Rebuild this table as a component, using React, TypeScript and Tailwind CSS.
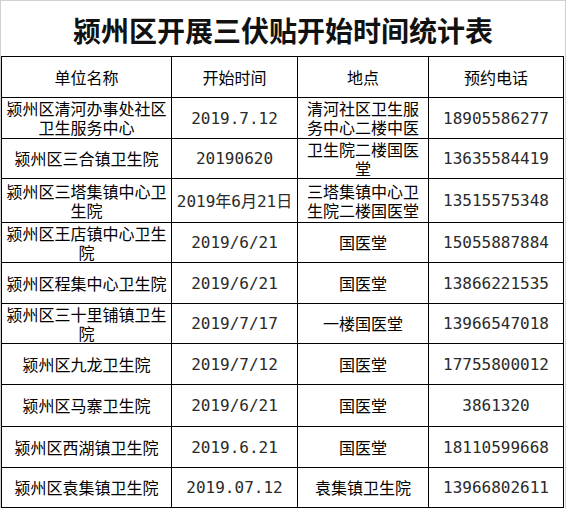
const cjk = "font-['Noto_Sans_CJK_SC',sans-serif]";
const mono = "font-['DejaVu_Sans_Mono','Noto_Sans_CJK_SC',monospace]";

type Row = { name: string; date: React.ReactNode; place: string; phone: string };

const rows: Row[] = [
  { name: "颍州区清河办事处社区卫生服务中心", date: "2019.7.12", place: "清河社区卫生服务中心二楼中医", phone: "18905586277" },
  { name: "颍州区三合镇卫生院", date: "20190620", place: "卫生院二楼国医堂", phone: "13635584419" },
  {
    name: "颍州区三塔集镇中心卫生院",
    date: (
      <>
        2019<span className={`${cjk} text-[16px]`}>年</span>6<span className={`${cjk} text-[16px]`}>月</span>21
        <span className={`${cjk} text-[16px]`}>日</span>
      </>
    ),
    place: "三塔集镇中心卫生院二楼国医堂",
    phone: "13515575348",
  },
  { name: "颍州区王店镇中心卫生院", date: "2019/6/21", place: "国医堂", phone: "15055887884" },
  { name: "颍州区程集中心卫生院", date: "2019/6/21", place: "国医堂", phone: "13866221535" },
  { name: "颍州区三十里铺镇卫生院", date: "2019/7/17", place: "一楼国医堂", phone: "13966547018" },
  { name: "颍州区九龙卫生院", date: "2019/7/12", place: "国医堂", phone: "17755800012" },
  { name: "颍州区马寨卫生院", date: "2019/6/21", place: "国医堂", phone: "3861320" },
  { name: "颍州区西湖镇卫生院", date: "2019.6.21", place: "国医堂", phone: "18110599668" },
  { name: "颍州区袁集镇卫生院", date: "2019.07.12", place: "袁集镇卫生院", phone: "13966802611" },
];

function Cell({ children, className = "" }: { children: React.ReactNode; className?: string }) {
  return (
    <div
      className={`flex items-center justify-center border-r border-b border-black px-[2px] text-center text-[16px] leading-[19px] ${className}`}
    >
      <div className="w-full">{children}</div>
    </div>
  );
}

export default function App() {
  return (
    <div className="h-[508px] w-[566px] overflow-hidden border-x border-t border-[#d0d0d0] bg-white">
      <div className={`flex h-[55px] items-center justify-center pt-[3px] ${cjk} text-[28px] font-bold text-[#111]`}>
        颍州区开展三伏贴开始时间统计表
      </div>
      <div className="grid w-[563px] grid-cols-[170px_126px_131px_135px] grid-rows-[41px_41px_40px_44px_40px_41px_40px_41px_42px_41px_40px] border-t border-l border-black">
        <Cell className={`${cjk} text-black`}>单位名称</Cell>
        <Cell className={`${cjk} text-black`}>开始时间</Cell>
        <Cell className={`${cjk} text-black`}>地点</Cell>
        <Cell className={`${cjk} text-black`}>预约电话</Cell>
        {rows.map((r) => (
          <div className="contents" key={r.name}>
            <Cell className={`${cjk} text-black`}>{r.name}</Cell>
            <Cell className={`${mono} text-[13px] text-[#2a2a2a]`}>{r.date}</Cell>
            <Cell className={`${cjk} text-black`}>{r.place}</Cell>
            <Cell className={`${mono} text-[13px] text-[#2a2a2a]`}>{r.phone}</Cell>
          </div>
        ))}
      </div>
    </div>
  );
}
